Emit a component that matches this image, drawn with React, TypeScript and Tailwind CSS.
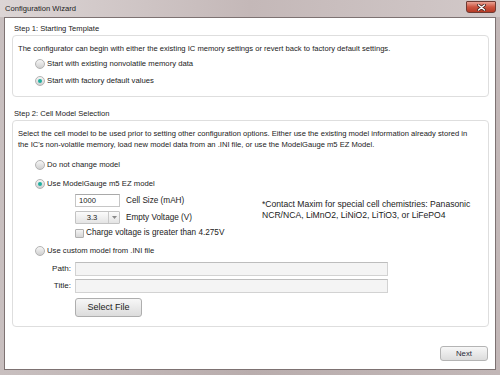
import React from 'react';

function Radio({ checked, label }: { checked?: boolean; label: string }) {
  return (
    <div className="flex h-[12px] items-center gap-[2px]">
      <span className="flex h-[10px] w-[10px] shrink-0 items-center justify-center rounded-full border border-[#b3b3b3] bg-linear-to-b from-[#f6f6f6] to-[#d0d0d0]">
        {checked && <span className="h-[4px] w-[4px] rounded-full bg-[#1fae9f]" />}
      </span>
      <span className="whitespace-nowrap text-[7.7px] leading-[12px] text-[#222]">{label}</span>
    </div>
  );
}

function GroupBox({ className, children }: { className?: string; children: React.ReactNode }) {
  return (
    <div className={`rounded-[4px] border border-[#dedede] pl-[5px] ${className ?? ''}`}>{children}</div>
  );
}

export default function App() {
  return (
    <div className="flex h-[375px] w-[500px] flex-col overflow-hidden bg-linear-to-r from-[#c8bfbf] via-[#b9adad] to-[#c2b7b7] font-['Liberation_Sans',Arial,sans-serif] text-[#222]">
      {/* Title bar */}
      <div className="flex h-[17px] shrink-0 items-start justify-between bg-linear-to-r from-[#dcd5d5] via-[#c4b8b8] to-[#d2c9c9] pl-[5px] pr-[4px]">
        <span className="mt-[4px] text-[7.6px] leading-[10px] text-[#1c1c1c]">Configuration Wizard</span>
        <div className="mt-[1px] flex h-[12px] w-[30px] items-center justify-center rounded-b-[3px] rounded-t-[1px] border border-[#6e3a33] bg-linear-to-b from-[#e9a194] via-[#cc5440] to-[#b53a25]">
          <svg width="9" height="7" viewBox="0 0 9 7">
            <path d="M1.5 1 L7.5 6 M7.5 1 L1.5 6" stroke="#4a2420" strokeWidth="3" strokeLinecap="round" />
            <path d="M1.5 1 L7.5 6 M7.5 1 L1.5 6" stroke="#ffffff" strokeWidth="1.5" strokeLinecap="round" />
          </svg>
        </div>
      </div>

      {/* Client area */}
      <div className="mx-[4px] flex flex-1 flex-col border border-[#7d7272] bg-white pl-[7px] pr-[6px]">
        {/* Step 1 */}
        <div className="ml-[2px] mt-[6px] text-[7.6px] leading-[10px]">Step 1: Starting Template</div>
        <GroupBox className="mt-[1px] pb-[9px] pt-[8px]">
          <p className="whitespace-nowrap text-[7.6px] leading-[10px]">
            The configurator can begin with either the existing IC memory settings or revert back to factory default settings.
          </p>
          <div className="ml-[17px] mt-[4px]">
            <Radio label="Start with existing nonvolatile memory data" />
          </div>
          <div className="ml-[17px] mt-[5px]">
            <Radio checked label="Start with factory default values" />
          </div>
        </GroupBox>

        {/* Step 2 */}
        <div className="ml-[2px] mt-[12px] text-[7.6px] leading-[10px]">Step 2: Cell Model Selection</div>
        <GroupBox className="mt-[1px] pb-[9px] pt-[7px]">
          <p className="whitespace-nowrap text-[7.6px] leading-[11px]">
            Select the cell model to be used prior to setting other configuration options. Either use the existing model information already stored in
            <br />
            the IC's non-volatile memory, load new model data from an .INI file, or use the ModelGauge m5 EZ Model.
          </p>
          <div className="ml-[17px] mt-[9px]">
            <Radio label="Do not change model" />
          </div>
          <div className="ml-[17px] mt-[7px]">
            <Radio checked label="Use ModelGauge m5 EZ model" />
          </div>

          <div className="mt-[4px] flex">
            <div className="ml-[57px] flex w-[187px] shrink-0 flex-col">
              <div className="flex items-center gap-[6px]">
                <div className="flex h-[13px] w-[45px] items-center border border-[#c6c6c6] border-t-[#a9a9a9] bg-white pl-[3px] text-[7.6px]">
                  1000
                </div>
                <span className="text-[8.2px] leading-[10px]">Cell Size (mAH)</span>
              </div>
              <div className="mt-[4px] flex items-center gap-[6px]">
                <div className="flex h-[13px] w-[45px] items-stretch rounded-[1px] border border-[#c3c3c3] bg-linear-to-b from-[#fbfbfb] to-[#e4e4e4]">
                  <span className="flex w-[33px] items-center justify-center border-r border-[#c9c9c9] text-[7.6px]">3.3</span>
                  <span className="flex flex-1 items-center justify-center">
                    <svg width="5" height="3" viewBox="0 0 5 3">
                      <path d="M0 0 H5 L2.5 3 Z" fill="#8a8a8a" />
                    </svg>
                  </span>
                </div>
                <span className="text-[8.2px] leading-[10px]">Empty Voltage (V)</span>
              </div>
              <div className="mt-[4px] flex h-[10px] items-center gap-[2px]">
                <span className="h-[9px] w-[9px] shrink-0 rounded-[1px] border border-[#b0b0b0] bg-linear-to-b from-[#f4f4f4] to-[#d6d6d6]" />
                <span className="whitespace-nowrap text-[8.2px] leading-[10px]">Charge voltage is greater than 4.275V</span>
              </div>
            </div>
            <p className="mt-[5px] whitespace-nowrap text-[8.6px] leading-[10.5px]">
              *Contact Maxim for special cell chemistries: Panasonic
              <br />
              NCR/NCA, LiMnO2, LiNiO2, LiTiO3, or LiFePO4
            </p>
          </div>

          <div className="ml-[17px] mt-[7px]">
            <Radio label="Use custom model from .INI file" />
          </div>
          <div className="mt-[5px] flex items-center gap-[4px]">
            <span className="w-[53px] text-right text-[8.1px] leading-[10px]">Path:</span>
            <div className="h-[14px] w-[313px] border border-[#d2d2d2] border-t-[#bdbdbd] bg-[#f4f4f4]" />
          </div>
          <div className="mt-[3px] flex items-center gap-[4px]">
            <span className="w-[53px] text-right text-[8.1px] leading-[10px]">Title:</span>
            <div className="h-[14px] w-[313px] border border-[#d2d2d2] border-t-[#bdbdbd] bg-[#f4f4f4]" />
          </div>
          <button className="ml-[57px] mt-[5px] flex h-[19px] w-[67px] items-center justify-center rounded-[3px] border border-[#aeaeae] bg-linear-to-b from-[#f7f7f7] to-[#dcdcdc] text-[9px] text-[#222]">
            Select File
          </button>
        </GroupBox>

        <button className="mr-[1px] mt-[19px] flex h-[15px] w-[48px] items-center justify-center self-end rounded-[3px] border border-[#b4b4b4] bg-linear-to-b from-[#f7f7f7] to-[#dcdcdc] text-[7.8px] text-[#2a2a3a]">
          Next
        </button>
      </div>
      <div className="h-[5px] shrink-0" />
    </div>
  );
}
